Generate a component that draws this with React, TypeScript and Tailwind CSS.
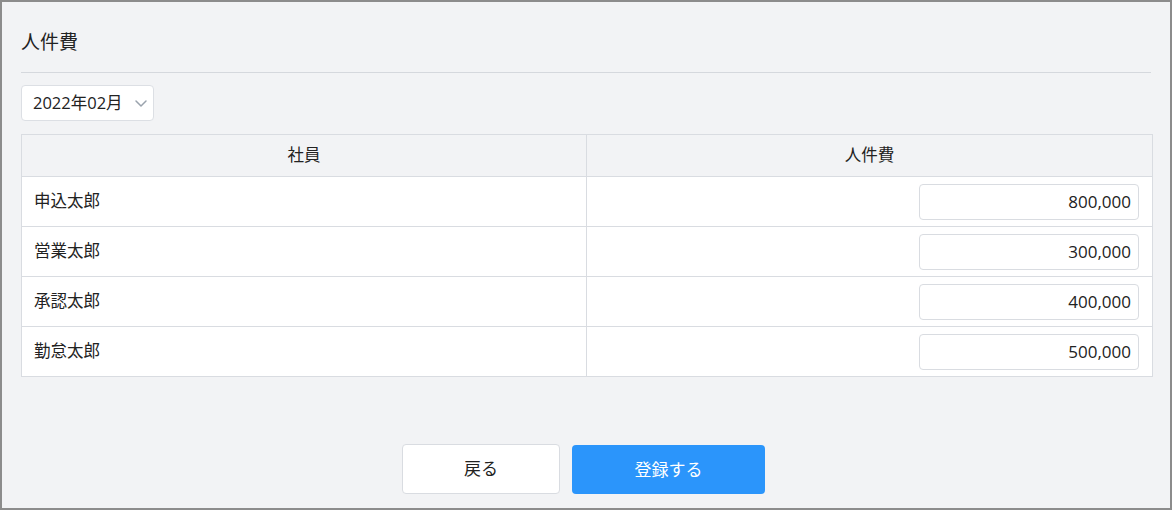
import React from "react";

const rows = [
  { name: "申込太郎", cost: "800,000" },
  { name: "営業太郎", cost: "300,000" },
  { name: "承認太郎", cost: "400,000" },
  { name: "勤怠太郎", cost: "500,000" },
];

const font = {
  fontFamily: '"Open Sans", "Noto Sans CJK JP", sans-serif',
};

export default function App() {
  return (
    <div className="w-[1174px] h-[512px] bg-white" style={font}>
      <div className="w-[1172px] h-[510px] border-2 border-[#8c8c8c] bg-[#f2f3f5] flex flex-col px-[19px] text-[#222]">
        <div className="h-[71px] flex items-center border-b border-[#d5d8dd] pt-[10px]">
          <h1 className="text-[19px] leading-none">人件費</h1>
        </div>
        <div className="pt-[12px]">
          <button className="h-[36px] w-[133px] bg-white border border-[#dcdfe4] rounded-[4px] flex items-center pl-[11px] pr-[5px] text-[16.5px] text-[#222]">
            <span>2022年02月</span>
            <svg className="ml-auto" width="14" height="14" viewBox="0 0 14 14" fill="none">
              <path d="M2 5 L7 10 L12 5" stroke="#9aa3ad" strokeWidth="1.5" strokeLinecap="round" strokeLinejoin="round" />
            </svg>
          </button>
        </div>
        <div className="mt-[13px] border border-[#d9dce1] bg-white w-[1132px] text-[16.5px]">
          <div className="grid grid-cols-[565px_1fr] h-[42px] bg-[#f2f3f5] border-b border-[#d9dce1]">
            <div className="flex items-center justify-center border-r border-[#d9dce1]">社員</div>
            <div className="flex items-center justify-center">人件費</div>
          </div>
          {rows.map((r, i) => {
            const last = i === rows.length - 1;
            return (
              <div
                key={r.name}
                className={`grid grid-cols-[565px_1fr] ${last ? "h-[49px]" : "h-[50px] border-b border-[#d9dce1]"}`}
              >
                <div className="flex items-center pl-[12px] border-r border-[#d9dce1]">{r.name}</div>
                <div className="flex items-center justify-end pr-[13px]">
                  <div className="w-[220px] h-[36px] border border-[#d9dce1] rounded-[4px] bg-white flex items-center justify-end pr-[7px] text-[17px]">
                    {r.cost}
                  </div>
                </div>
              </div>
            );
          })}
        </div>
        <div className="mt-[67px] flex justify-center gap-[12px] pr-[5px] text-[17px]">
          <button className="w-[158px] h-[50px] bg-white border border-[#d9dce1] rounded-[4px] text-[#222]">戻る</button>
          <button className="w-[193px] h-[49px] mt-[1px] bg-[#2b95fb] rounded-[4px] text-white">登録する</button>
        </div>
      </div>
    </div>
  );
}
